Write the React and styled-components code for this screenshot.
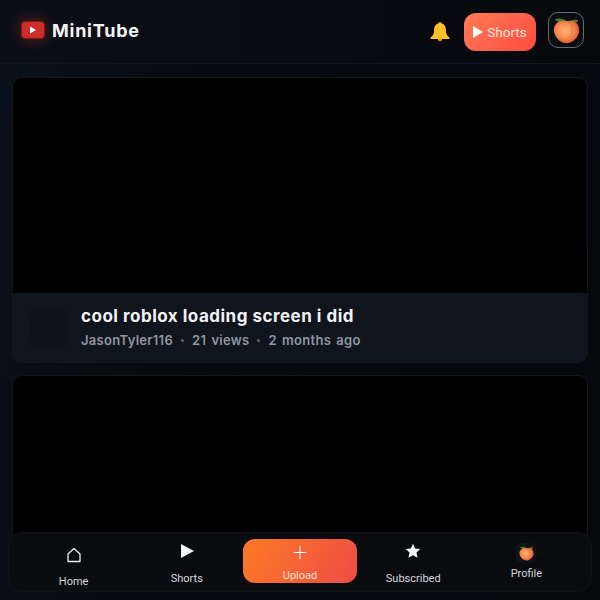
import React from "react";
import styled, { createGlobalStyle } from "styled-components";

const Global = createGlobalStyle`
  html, body { margin: 0; padding: 0; height: 100%; background: #05070b; }
  #root { height: 100%; }
  * { box-sizing: border-box; }
`;

const Page = styled.div`
  position: relative;
  width: 600px;
  height: 600px;
  overflow: hidden;
  background: linear-gradient(100deg, #0c121c 0%, #070a10 30%, #05070b 100%);
  font-family: "Inter", "Liberation Sans", sans-serif;
`;

const Header = styled.header`
  height: 64px;
  display: flex;
  align-items: center;
  padding: 0 16px 3px 21px;
  background: linear-gradient(90deg, #0c0f17 0%, #090b11 50%, #06080c 100%);
  border-bottom: 1px solid #11151c;
`;

const Logo = styled.div`
  display: flex;
  align-items: center;
  gap: 7px;
  flex: 1;
`;

const LogoMark = styled.svg`
  width: 24px;
  height: 18px;
  filter: drop-shadow(0 0 7px rgba(220, 50, 40, 0.45));
`;

const LogoText = styled.span`
  font-size: 18px;
  font-weight: 700;
  letter-spacing: 0.75px;
  color: #f4f5f7;
`;

const BellIcon = styled.svg`
  width: 22px;
  height: 22px;
  margin: 3px 13px 0 0;
`;

const ShortsButton = styled.div`
  width: 72px;
  height: 38px;
  border-radius: 12px;
  display: flex;
  align-items: center;
  justify-content: center;
  gap: 4px;
  background: linear-gradient(135deg, #ff7b55 0%, #ff4c40 100%);
  color: #ffe3dc;
  font-family: "Roboto", sans-serif;
  font-size: 13.500px;
  margin: 4px 12px 0 0;
`;

const Avatar = styled.div`
  width: 36px;
  height: 36px;
  border-radius: 10px;
  border: 1px solid #666c74;
  background: #0a0d12;
  display: flex;
  align-items: center;
  justify-content: center;
`;

const Feed = styled.main`
  display: flex;
  flex-direction: column;
  gap: 12px;
  padding: 13px 12px 0;
`;

const Card = styled.article`
  border-radius: 10px;
  overflow: hidden;
  border: 1px solid #12161d;
  background: #10141d;
`;

const Video = styled.div`
  height: ${(p) => p.$h}px;
  background: #000;
`;

const Info = styled.div`
  height: 69px;
  display: flex;
  align-items: center;
  gap: 11px;
  padding: 0 0 1px 14px;
  background: #10141d;
`;

const ChannelThumb = styled.div`
  width: 43px;
  height: 43px;
  border-radius: 8px;
  background: #0e1219;
  border: 1px solid #131720;
`;

const InfoText = styled.div`
  display: flex;
  flex-direction: column;
  gap: 6px;
`;

const Title = styled.div`
  font-size: 17px;
  font-weight: 700;
  letter-spacing: 0.5px;
  color: #f2f3f5;
`;

const Meta = styled.div`
  display: flex;
  align-items: center;
  gap: 7px;
  font-size: 13px;
  font-weight: 600;
  letter-spacing: 0.3px;
  word-spacing: 1.600px;
  color: #8f96a2;
`;

const Dot = styled.span`
  width: 3px;
  height: 3px;
  margin: 0 1px;
  border-radius: 50%;
  background: #5c6470;
`;

const BottomNav = styled.nav`
  position: absolute;
  left: 8px;
  right: 8px;
  bottom: 8px;
  height: 60px;
  padding: 0 8px;
  border-radius: 14px;
  display: grid;
  grid-template-columns: repeat(5, 1fr);
  background: #0a0b0e;
  border: 1px solid #101216;
`;

const NavItem = styled.div`
  display: flex;
  flex-direction: column;
  align-items: center;
  color: #d6d8dc;
  font-family: "Roboto", sans-serif;
  font-size: 11px;
  line-height: 14px;
  padding-top: ${(p) => p.$top}px;
  gap: ${(p) => p.$gap}px;
`;

const UploadButton = styled.div`
  margin-top: 6px;
  border-radius: 12px;
  height: 44px;
  display: flex;
  flex-direction: column;
  align-items: center;
  gap: 10px;
  padding-top: 7px;
  background: linear-gradient(120deg, #fd7a26 0%, #ee4c45 100%);
  color: #ffe3d2;
  font-family: "Roboto", sans-serif;
  font-size: 11px;
  line-height: 14px;
`;

const ProfileIcon = styled.div`
  width: 20px;
  height: 20px;
  border-radius: 5px;
  background: #101318;
  display: flex;
  align-items: center;
  justify-content: center;
`;

const Peach = ({ size, id }) => (
  <svg width={size} height={size} viewBox="0 0 32 32">
    <defs>
      <radialGradient id={id} cx="0.45" cy="0.45" r="0.6">
        <stop offset="0" stopColor="#ffb27a" />
        <stop offset="0.55" stopColor="#f68d52" />
        <stop offset="1" stopColor="#d9522e" />
      </radialGradient>
    </defs>
    <path d="M2 3c4-2 9-2 14 2-1 2-8 3-14-2zM21 5c2-2 6-3 9-1-1 3-6 4-9 1z" fill="#4f7f2c" />
    <path d="M18 5c6-2 13 2 13 11 0 8-8 15-15 15C9 31 1 24 1 15 1 7 10 2 18 5z" fill={`url(#${id})`} />
    <path d="M18.500 5.500c3 3 5 8 4 13-.6 4-3 8-6 11" stroke="#cf5d33" strokeWidth="1" fill="none" opacity=".55" />
  </svg>
);

export default function App() {
  return (
    <Page>
      <Global />
      <Header>
        <Logo>
          <LogoMark viewBox="0 0 24 18">
            <rect x="0.5" y="0.5" width="23" height="17" rx="3.500" fill="#cc2e2c" stroke="#7d1818" />
            <path d="M9 5.500v7l6-3.500z" fill="#fff" />
          </LogoMark>
          <LogoText>MiniTube</LogoText>
        </Logo>
        <BellIcon viewBox="0 0 24 24">
          <circle cx="12" cy="2.800" r="1.800" fill="#f5a800" />
          <path d="M12 2.500c-4.800 0-6.500 3.800-6.500 8 0 3.500-1.300 5.500-3.800 7.500v1.500h20.600V18c-2.500-2-3.800-4-3.800-7.500 0-4.200-1.700-8-6.500-8z" fill="#fdc22a" />
          <path d="M9.500 19.500h5a2.500 2.500 0 0 1-5 0z" fill="#e08f00" />
        </BellIcon>
        <ShortsButton>
          <svg width="10" height="12" viewBox="0 0 10 12"><path d="M0 0l10 6-10 6z" fill="#fff" /></svg>
          Shorts
        </ShortsButton>
        <Avatar><Peach size={27} id="peachTop" /></Avatar>
      </Header>
      <Feed>
        <Card>
          <Video $h={215} />
          <Info>
            <ChannelThumb />
            <InfoText>
              <Title>cool roblox loading screen i did</Title>
              <Meta>
                <span>JasonTyler116</span><Dot /><span>21 views</span><Dot /><span>2 months ago</span>
              </Meta>
            </InfoText>
          </Info>
        </Card>
        <Card>
          <Video $h={215} />
        </Card>
      </Feed>
      <BottomNav>
        <NavItem $top={13} $gap={11}>
          <svg width="18" height="18" viewBox="0 0 18 18" fill="none" stroke="#eceef0" strokeWidth="1.300">
            <path d="M3 8l6-5.500L15 8v7.500H3z" strokeLinejoin="round" />
          </svg>
          Home
        </NavItem>
        <NavItem $top={10} $gap={13}>
          <svg width="14" height="16" viewBox="0 0 14 16"><path d="M1 1l13 7-13 7z" fill="#f5f6f7" /></svg>
          Shorts
        </NavItem>
        <UploadButton>
          <svg width="14" height="14" viewBox="0 0 14 14" stroke="#fff" strokeWidth="1.200"><path d="M7 0v14M0 7h14" /></svg>
          Upload
        </UploadButton>
        <NavItem $top={10} $gap={13}>
          <svg width="16" height="16" viewBox="0 0 16 16"><path d="M8 .8l2.200 4.700 5.100.6-3.800 3.500 1 5.100L8 12.200l-4.500 2.500 1-5.100L.7 6.100l5.100-.6z" fill="#f5f6f7" /></svg>
          Subscribed
        </NavItem>
        <NavItem $top={10} $gap={4}>
          <ProfileIcon><Peach size={15} id="peachNav" /></ProfileIcon>
          Profile
        </NavItem>
      </BottomNav>
    </Page>
  );
}
